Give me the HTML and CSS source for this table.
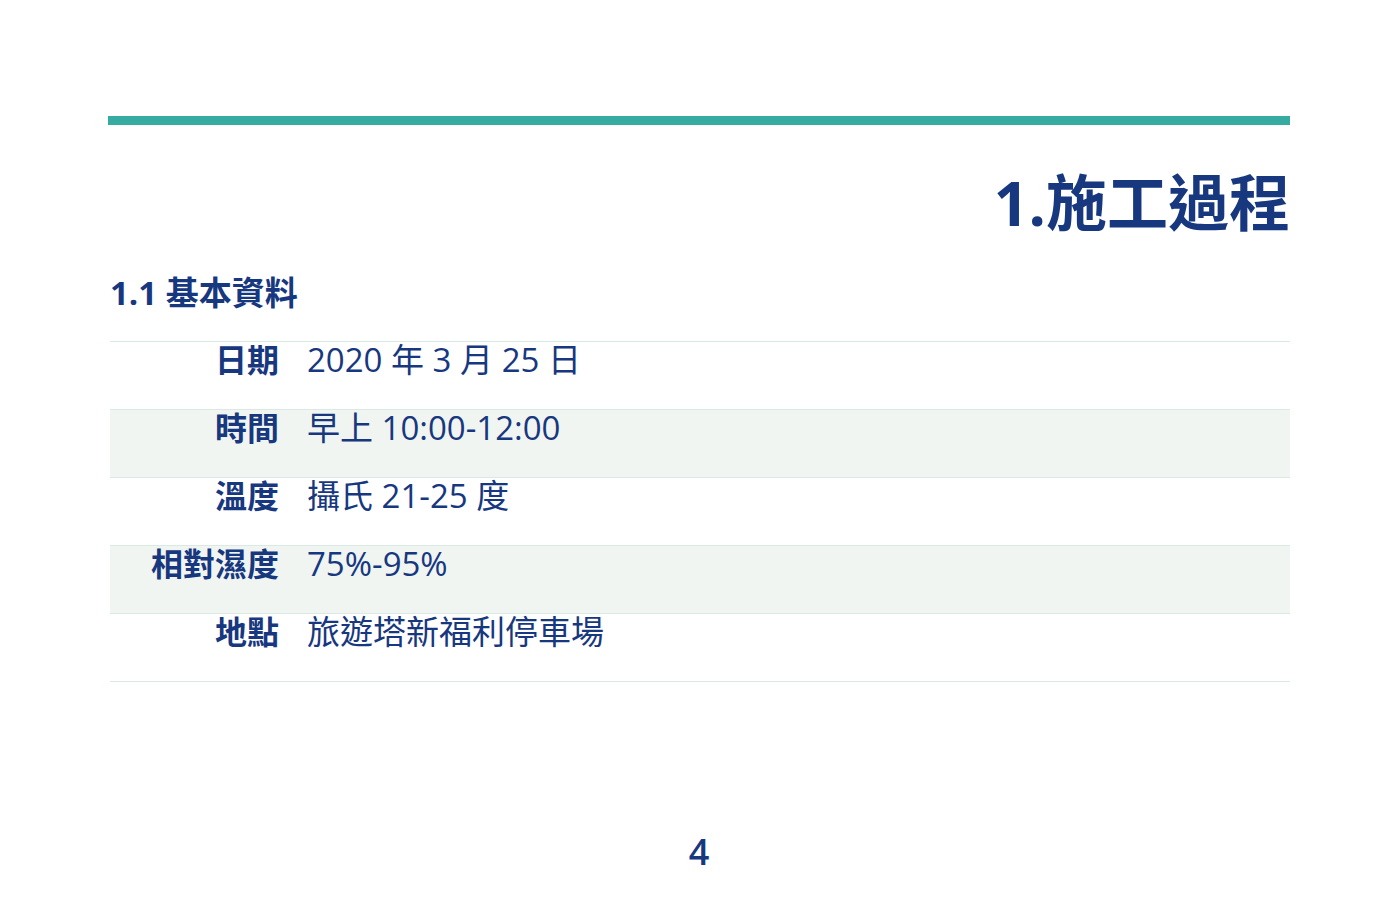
FILE: index.html
```html
<!DOCTYPE html>
<html lang="zh-Hant">
<head>
<meta charset="utf-8">
<link rel="stylesheet" href="styles.css">
</head>
<body>
<div class="page">
  <div class="bar"></div>
  <h1 class="title">1.施工過程</h1>
  <h2 class="subtitle">1.1 基本資料</h2>
  <div class="table">
    <div class="row"><div class="label">日期</div><div class="value">2020 年 3 月 25 日</div></div>
    <div class="row alt"><div class="label">時間</div><div class="value">早上 10:00-12:00</div></div>
    <div class="row"><div class="label">溫度</div><div class="value">攝氏 21-25 度</div></div>
    <div class="row alt"><div class="label">相對濕度</div><div class="value">75%-95%</div></div>
    <div class="row last"><div class="label">地點</div><div class="value">旅遊塔新福利停車場</div></div>
  </div>
  <div class="pagenum">4</div>
</div>
</body>
</html>
```
FILE: styles.css
```css
html, body {
  margin: 0;
  padding: 0;
  background: #ffffff;
}
body {
  font-family: "Open Sans", "Noto Sans CJK TC", sans-serif;
  color: #17387f;
}
.page {
  width: 1400px;
  height: 918px;
  box-sizing: border-box;
  padding: 116px 110px 0 108px;
  display: flex;
  flex-direction: column;
}
.bar {
  height: 9px;
  background: #35aba1;
}
.title {
  margin: 38px 0 0 0;
  text-align: right;
  font-size: 61px;
  line-height: 80px;
  font-weight: 700;
}
.subtitle {
  margin: 28px 0 0 2px;
  font-size: 33px;
  line-height: 44px;
  font-weight: 700;
}
.table {
  margin: 26px 0 0 2px;
  display: flex;
  flex-direction: column;
}
.row {
  display: flex;
  align-items: flex-start;
  border-top: 1px solid #dbe9e5;
  height: 67px;
}
.row.last {
  border-bottom: 1px solid #dbe9e5;
}
.row.alt {
  background: #f0f5f2;
}
.label {
  width: 169px;
  text-align: right;
  font-weight: 700;
  font-size: 32px;
  line-height: 36px;
}
.value {
  margin-left: 28px;
  font-size: 33px;
  line-height: 36px;
}
.pagenum {
  margin-top: 150px;
  text-align: center;
  font-size: 36px;
  font-weight: 600;
  line-height: 40px;
}
```
